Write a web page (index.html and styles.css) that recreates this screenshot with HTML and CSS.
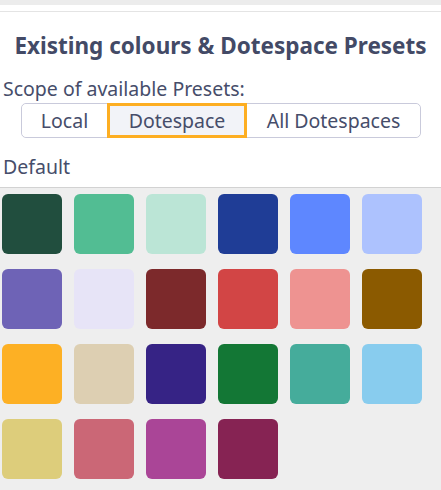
FILE: index.html
```html
<!DOCTYPE html>
<html>
<head>
<meta charset="utf-8">
<link rel="stylesheet" href="styles.css">
</head>
<body>
<div class="topbar"></div>
<div class="panel">
  <h1 class="title">Existing colours &amp; Dotespace Presets</h1>
  <div class="label">Scope of available Presets:</div>
  <div class="seg-wrap">
    <div class="seg">
      <button class="seg-btn first">Local</button>
      <button class="seg-btn active">Dotespace</button>
      <button class="seg-btn last">All Dotespaces</button>
    </div>
  </div>
  <div class="label default">Default</div>
</div>
<div class="swatches">
  <div class="sw" style="background:#214e3e"></div>
  <div class="sw" style="background:#52bd93"></div>
  <div class="sw" style="background:#bbe5d6"></div>
  <div class="sw" style="background:#1f3d96"></div>
  <div class="sw" style="background:#5e87ff"></div>
  <div class="sw" style="background:#adc2fe"></div>
  <div class="sw" style="background:#6e63b6"></div>
  <div class="sw" style="background:#e7e4f7"></div>
  <div class="sw" style="background:#7c292b"></div>
  <div class="sw" style="background:#d24545"></div>
  <div class="sw" style="background:#ee9391"></div>
  <div class="sw" style="background:#8b5a00"></div>
  <div class="sw" style="background:#fdb024"></div>
  <div class="sw" style="background:#ddcfb2"></div>
  <div class="sw" style="background:#362385"></div>
  <div class="sw" style="background:#137735"></div>
  <div class="sw" style="background:#45ac9b"></div>
  <div class="sw" style="background:#88ccee"></div>
  <div class="sw" style="background:#ddcd7b"></div>
  <div class="sw" style="background:#cb6776"></div>
  <div class="sw" style="background:#aa4597"></div>
  <div class="sw" style="background:#862353"></div>
</div>
</body>
</html>
```
FILE: styles.css
```css
html, body {
  margin: 0;
  padding: 0;
}
body {
  width: 441px;
  height: 490px;
  overflow: hidden;
  background: #eeeeee;
  font-family: "Noto Sans", "Open Sans", sans-serif;
  color: #464d6a;
}
.topbar {
  height: 5px;
  background: #ececec;
  border-bottom: 6px solid #ffffff;
}
.panel {
  background: #ffffff;
  border-top: 1px solid #e4e4e4;
  border-bottom: 1px solid #d2d2d2;
  height: 177px;
  box-sizing: border-box;
}
.title {
  margin: 0;
  padding-top: 19px;
  text-align: center;
  font-size: 22.5px;
  font-weight: 700;
  line-height: 30px;
  color: #434a66;
  white-space: nowrap;
}
.label {
  margin: 16px 0 0 3px;
  font-size: 19.5px;
  line-height: 24px;
}
.seg-wrap {
  display: flex;
  padding-left: 21px;
  margin-top: 2px;
}
.seg {
  display: flex;
  border: 1px solid #c9cadb;
  border-radius: 5px;
  height: 35px;
  box-sizing: border-box;
}
.seg-btn {
  font-family: inherit;
  font-size: 19.5px;
  color: #464d6a;
  background: #ffffff;
  border: none;
  padding: 0;
  margin: 0;
  border-radius: 5px;
  white-space: nowrap;
}
.seg-btn.first { width: 85px; }
.seg-btn.active {
  width: 140px;
  background: #f2f3f8;
  border: 3px solid #fdae22;
  border-radius: 0;
  margin: -1px 0;
}
.seg-btn.last { width: 173px; }
.default {
  margin-top: 17px;
}
.swatches {
  display: grid;
  grid-template-columns: repeat(6, 60px);
  grid-auto-rows: 60px;
  column-gap: 12px;
  row-gap: 15px;
  padding: 6px 0 0 2px;
}
.sw {
  border-radius: 6px;
}
```
